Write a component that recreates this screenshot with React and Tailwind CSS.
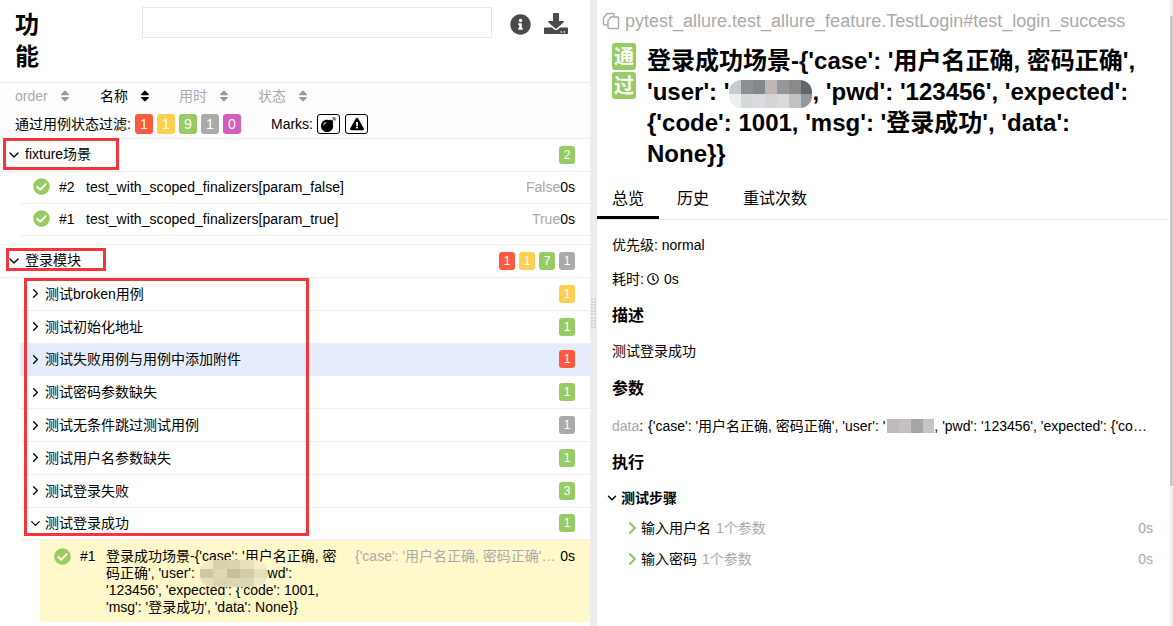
import { ChevronDown, ChevronRight } from "lucide-react";
import {
  FaBomb,
  FaCheckCircle,
  FaChevronRight,
  FaDownload,
  FaExclamationTriangle,
  FaInfoCircle,
  FaRegClock,
  FaSort,
} from "react-icons/fa";

const badgeColors = {
  red: "bg-[#fd5a3e]",
  yellow: "bg-[#ffd050]",
  green: "bg-[#97cc64]",
  gray: "bg-[#aaaaaa]",
  pink: "bg-[#d35ebe]",
};

const subGroups = [
  { name: "测试broken用例", color: "yellow", count: 1 },
  { name: "测试初始化地址", color: "green", count: 1 },
  { name: "测试失败用例与用例中添加附件", color: "red", count: 1, active: true },
  { name: "测试密码参数缺失", color: "green", count: 1 },
  { name: "测试无条件跳过测试用例", color: "gray", count: 1 },
  { name: "测试用户名参数缺失", color: "green", count: 1 },
  { name: "测试登录失败", color: "green", count: 3 },
  { name: "测试登录成功", color: "green", count: 1, open: true },
];

function Badge({ color, children, big }) {
  return (
    <span
      className={`inline-flex items-center justify-center rounded-[3px] text-white ${badgeColors[color]} ${
        big ? "h-[20px] w-[18px] text-[14px]" : "h-[18px] w-[16px] text-[12px]"
      }`}
    >
      {children}
    </span>
  );
}

function SortHead({ label, active }) {
  return (
    <div className={`flex items-center gap-[12px] ${active ? "text-black" : "text-[#aaaaaa]"}`}>
      <span>{label}</span>
      <FaSort className={`h-[14px] w-[10px] ${active ? "text-black" : "text-[#999999]"}`} />
    </div>
  );
}

function Mosaic({ cols, rows, cells, className }) {
  return (
    <span className={`grid overflow-hidden ${cols} ${rows} ${className}`}>
      {cells.map((c, i) => (
        <span key={i} className={c} />
      ))}
    </span>
  );
}

function TestRow({ num, name, param }) {
  return (
    <div className="ml-[20px] flex h-[32px] items-center border-b border-[#eceef0] pb-[2px] pl-[13px] pr-[15px] last:border-b-0">
      <FaCheckCircle className="h-[17px] w-[17px] text-[#97cc64]" />
      <span className="ml-[9px] w-[27px]">{num}</span>
      <span className="flex-1 tracking-[0.05px]">{name}</span>
      <span className="text-[#aaaaaa]">{param}</span>
      <span>0s</span>
    </div>
  );
}

function LeftPane() {
  return (
    <div className="relative h-full w-[590px] shrink-0 overflow-hidden bg-white text-[14px] leading-[20px] text-black">
      {/* header */}
      <div className="flex h-[83px] border-b border-[#e8eaec]">
        <h2 className="ml-[15px] mt-[9px] w-[26px] text-[24px] font-bold leading-[32px]">功能</h2>
        <div className="ml-[101px] mt-[7px] h-[31px] w-[350px] border border-[#e5e7e9] bg-white" />
        <FaInfoCircle className="ml-[18px] mt-[14px] h-[21px] w-[21px] text-[#4a4a4a]" />
        <FaDownload preserveAspectRatio="none" className="ml-[13px] mt-[13px] h-[21px] w-[24px] text-[#4a4a4a]" />
      </div>

      {/* sort and filter */}
      <div className="h-[56px] border-b border-[#e8eaec] bg-[#fdfdfd] pl-[15px]">
        <div className="flex h-[26px] items-center">
          <div className="w-[85px]"><SortHead label="order" /></div>
          <div className="w-[79px]"><SortHead label="名称" active /></div>
          <div className="w-[79px]"><SortHead label="用时" /></div>
          <SortHead label="状态" />
        </div>
        <div className="mt-[5px] flex h-[20px] items-center">
          <span className="w-[120px] whitespace-nowrap">通过用例状态过滤:</span>
          <div className="flex gap-[4px]">
            <Badge big color="red">1</Badge>
            <Badge big color="yellow">1</Badge>
            <Badge big color="green">9</Badge>
            <Badge big color="gray">1</Badge>
            <Badge big color="pink">0</Badge>
          </div>
          <span className="ml-[30px]">Marks:</span>
          <div className="ml-[4px] flex gap-[5px]">
            <span className="flex h-[20px] w-[23px] items-center justify-center rounded-[3px] border border-black">
              <FaBomb className="h-[15px] w-[15px]" />
            </span>
            <span className="flex h-[20px] w-[23px] items-center justify-center rounded-[3px] border border-black">
              <FaExclamationTriangle className="h-[14px] w-[14px]" />
            </span>
          </div>
        </div>
      </div>

      {/* fixture group */}
      <div className="flex h-[33px] items-center border-b border-[#eceef0] pl-[6px] pr-[15px]">
        <ChevronDown className="h-[16px] w-[16px]" strokeWidth={2} />
        <span className="-mt-[2px] ml-[3px] flex-1">fixture场景</span>
        <Badge color="green">2</Badge>
      </div>
      <TestRow num="#2" name="test_with_scoped_finalizers[param_false]" param="False" />
      <TestRow num="#1" name="test_with_scoped_finalizers[param_true]" param="True" />

      {/* login group */}
      <div className="mt-[8px] flex h-[34px] items-center border-y border-[#eceef0] pl-[6px] pr-[15px]">
        <ChevronDown className="h-[16px] w-[16px]" strokeWidth={2} />
        <span className="-mt-[2px] ml-[3px] flex-1">登录模块</span>
        <div className="flex gap-[4px]">
          <Badge color="red">1</Badge>
          <Badge color="yellow">1</Badge>
          <Badge color="green">7</Badge>
          <Badge color="gray">1</Badge>
        </div>
      </div>
      {subGroups.map((g) => (
        <div
          key={g.name}
          className={`ml-[20px] flex h-[32.8px] items-center border-b border-[#eceef0] pl-[8px] pr-[15px] ${
            g.active ? "bg-[#e5edfc]" : ""
          }`}
        >
          {g.open ? (
            <ChevronDown className="h-[15px] w-[15px]" strokeWidth={2} />
          ) : (
            <ChevronRight className="h-[15px] w-[15px]" strokeWidth={2} />
          )}
          <span className="ml-[2px] flex-1">{g.name}</span>
          <Badge color={g.color}>{g.count}</Badge>
        </div>
      ))}

      {/* selected test */}
      <div className="ml-[40px] flex h-[82px] bg-[#fef8cb] pl-[14px] pr-[15px] pt-[8px] leading-[16.8px]">
        <FaCheckCircle className="h-[17px] w-[17px] shrink-0 text-[#97cc64]" />
        <span className="ml-[9px] w-[26px] shrink-0">#1</span>
        <div className="relative w-[236px] shrink-0 whitespace-nowrap">
          登录成功场景-{"{"}'case': '用户名正确, 密
          <br />
          码正确', 'user': <span className="inline-block w-[61px]" />owd':
          <br />
          '123456', 'expected': {"{"}'code': 1001,
          <br />
          'msg': '登录成功', 'data': None{"}}"}
          <Mosaic
            cols="grid-cols-5"
            rows="grid-rows-3"
            className="absolute left-[94px] top-[12px] h-[27px] w-[67px] rounded-[12px]"
            cells={[
              "bg-[#efe9c4]", "bg-[#d8d0a8]", "bg-[#d9d3ae]", "bg-[#e6dfba]", "bg-[#f5efc8]",
              "bg-[#cfc7a2]", "bg-[#ddd7b2]", "bg-[#c7bf9c]", "bg-[#d2cba8]", "bg-[#e5dfba]",
              "bg-[#e5dfba]", "bg-[#d9d3ae]", "bg-[#dcd6b1]", "bg-[#dcd6b1]", "bg-[#efe9c4]",
            ]}
          />
        </div>
        <span className="ml-[13px] min-w-0 flex-1 whitespace-nowrap text-[#aaaaaa]">{"{"}'case': '用户名正确, 密码正确'…</span>
        <span className="shrink-0">0s</span>
      </div>

      {/* red annotation boxes */}
      <div className="absolute left-[3px] top-[138px] h-[32px] w-[116px] border-[3px] border-[#f5353b]" />
      <div className="absolute left-[6px] top-[248px] h-[23px] w-[100px] border-[3px] border-[#f5353b]" />
      <div className="absolute left-[24px] top-[278px] h-[258px] w-[285px] border-[3px] border-[#f5353b]" />
    </div>
  );
}

function Step({ name, params }) {
  return (
    <div className="flex h-[31px] items-center pl-[30px] pr-[17px]">
      <FaChevronRight className="h-[14px] w-[11px] text-[#97cc64]" />
      <span className="ml-[3px] text-black">{name}</span>
      <span className="ml-[5px] flex-1 text-[#aaaaaa]">{params}</span>
      <span className="text-[#aaaaaa]">0s</span>
    </div>
  );
}

function CopyIcon() {
  return (
    <svg viewBox="0 0 18 18" fill="none" stroke="currentColor" strokeWidth="1.4" className="h-[18px] w-[18px]">
      <path d="M5 1.5H11a1 1 0 0 1 1 1V5" />
      <path d="M5 1.5L1.5 6V12a1 1 0 0 0 1 1H6" />
      <path d="M9 5H15.5a1 1 0 0 1 1 1V15.5a1 1 0 0 1-1 1H7a1 1 0 0 1-1-1V8.5Z" />
    </svg>
  );
}

function RightPane() {
  return (
    <div className="flex h-full min-w-0 flex-1 overflow-hidden bg-white text-[14px] leading-[20px] text-black">
      <div className="min-w-0 flex-1">
        <div className="flex h-[42px] items-center pl-[5px] text-[18px] text-[#aaaaaa]">
          <CopyIcon />
          <span className="ml-[5px] whitespace-nowrap">pytest_allure.test_allure_feature.TestLogin#test_login_success</span>
        </div>
        <div className="flex pl-[15px]">
          <div className="mt-[1px] flex w-[24px] shrink-0 flex-col gap-[2px] self-start">
            <div className="flex h-[27px] items-center justify-center rounded-[3px] bg-[#97cc64] text-[20px] font-bold text-white">通</div>
            <div className="flex h-[27px] items-center justify-center rounded-[3px] bg-[#97cc64] text-[20px] font-bold text-white">过</div>
          </div>
          <h2 className="ml-[11px] mt-[3px] min-w-0 flex-1 whitespace-nowrap text-[24px] font-bold leading-[31px]">
            登录成功场景-{"{"}'case': '用户名正确, 密码正确',
            <br />
            'user': '
            <Mosaic
              cols="grid-cols-7"
              rows="grid-rows-2"
              className="-my-[8px] inline-grid h-[28px] w-[83px] rounded-[12px] align-middle"
              cells={[
                "bg-[#c8cacb]", "bg-[#8b9093]", "bg-[#85888a]", "bg-[#bdb8b3]", "bg-[#94989a]", "bg-[#8a8a8a]", "bg-[#62666b]",
                "bg-[#eeeeee]", "bg-[#d5d8da]", "bg-[#d9dbdc]", "bg-[#d2d4d5]", "bg-[#d8dadb]", "bg-[#bfc1c2]", "bg-[#96999b]",
              ]}
            />
            , 'pwd': '123456', 'expected':
            <br />
            {"{"}'code': 1001, 'msg': '登录成功', 'data':
            <br />
            None{"}}"}
          </h2>
        </div>

        {/* tabs */}
        <div className="mr-[2px] mt-[12px] flex h-[39px] items-start border-b border-[#e8eaec] text-[16px]">
          <div className="flex h-[38px] w-[62px] items-center border-b-[3px] border-black pl-[15px]">总览</div>
          <div className="ml-[18px] flex h-[35px] items-center">历史</div>
          <div className="ml-[34px] flex h-[35px] items-center">重试次数</div>
        </div>

        <div className="pl-[15px] pr-[17px]">
          <div className="mt-[15px]">优先级: normal</div>
          <div className="mt-[14px] flex items-center">
            耗时:
            <FaRegClock className="ml-[3px] h-[12px] w-[12px]" />
            <span className="ml-[5px]">0s</span>
          </div>
          <h3 className="mt-[16px] text-[16px] font-bold leading-[22px]">描述</h3>
          <div className="mt-[14px]">测试登录成功</div>
          <h3 className="mt-[17px] text-[16px] font-bold leading-[22px]">参数</h3>
          <div className="mt-[16px] flex">
            <span className="text-[#aaaaaa]">data</span>
            <span className="mr-[1px]">:&nbsp;</span>
            <div className="flex min-w-0 flex-1 whitespace-nowrap">
              <span className="shrink-0">{"{"}'case': '用户名正确, 密码正确', 'user': '</span>
              <Mosaic
                cols="grid-cols-4"
                rows="grid-rows-1"
                className="ml-[2px] h-[14px] w-[47px] shrink-0 translate-y-[3px]"
                cells={["bg-[#bdb9bc]", "bg-[#c2c0c2]", "bg-[#a8a5a5]", "bg-[#c5c4c6]"]}
              />
              <span className="min-w-0 flex-1">, 'pwd': '123456', 'expected': {"{"}'co…</span>
            </div>
          </div>
          <h3 className="mt-[16px] text-[16px] font-bold leading-[22px]">执行</h3>
        </div>

        <div className="mt-[14px] flex items-center pl-[8px] font-bold">
          <ChevronDown className="h-[14px] w-[14px]" strokeWidth={2.5} />
          <span className="ml-[2px]">测试步骤</span>
        </div>
        <div className="mt-[4px]">
          <Step name="输入用户名" params="1个参数" />
          <Step name="输入密码" params="1个参数" />
        </div>
      </div>
      {/* scrollbar */}
      <div className="w-[3px] shrink-0 bg-[#f1f1f1] pt-[16px]">
        <div className="h-[470px] bg-[#c8c8c8]" />
      </div>
    </div>
  );
}

export default function App() {
  return (
    <div className="flex h-[626px] w-[1173px] overflow-hidden bg-white font-['Liberation_Sans','Noto_Sans_CJK_SC',sans-serif]">
      <LeftPane />
      {/* side-by-side gutter */}
      <div className="flex w-[7px] shrink-0 items-center bg-[#eaeef1] pl-[1px]">
        <div className="grid h-[30px] w-[5px] grid-cols-2 gap-[1px]">
          {Array.from({ length: 20 }).map((_, i) => (
            <span key={i} className="h-[2px] w-[2px] bg-[#d0d3d6]" />
          ))}
        </div>
      </div>
      <RightPane />
    </div>
  );
}
